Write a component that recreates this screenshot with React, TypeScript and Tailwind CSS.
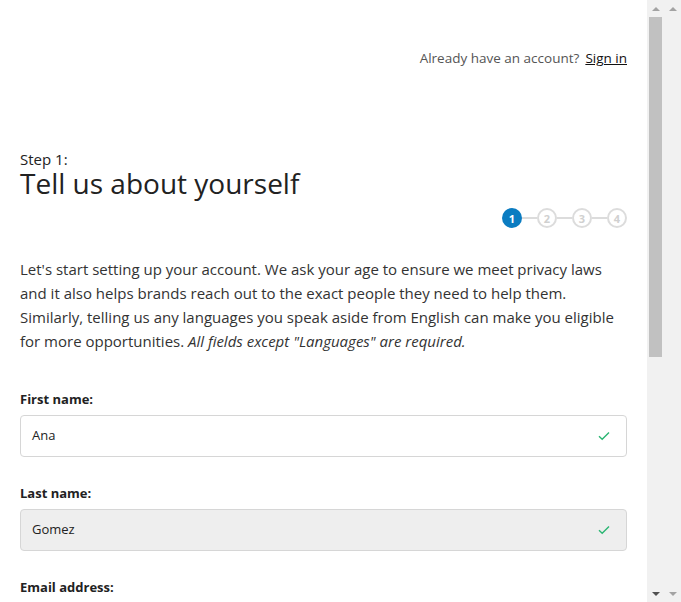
import React from 'react';

const font = "font-['Open_Sans','Liberation_Sans',sans-serif]";

const CheckIcon = () => (
  <svg width="12" height="10" viewBox="0 0 12 10" fill="none" className="shrink-0">
    <path d="M1 5.2 L4.2 8.3 L11 1.5" stroke="#2bb673" strokeWidth="1.4" />
  </svg>
);

interface FieldProps {
  label: string;
  value?: string;
  filled?: boolean;
  valid?: boolean;
}

const Field: React.FC<FieldProps> = ({ label, value = '', filled, valid }) => (
  <div className="flex flex-col gap-[6px] pb-[26px]">
    <label className="text-[13px] leading-5 font-bold text-[#222]">{label}</label>
    <div
      className={`flex h-[42px] items-center justify-between rounded-[4px] border border-[#d6d6d6] pr-[16px] pl-[11px] ${
        filled ? 'bg-[#eeeeee]' : 'bg-white'
      }`}
    >
      <span className="text-[13px] text-[#222]">{value}</span>
      {valid && <CheckIcon />}
    </div>
  </div>
);

const Stepper = () => (
  <div className="flex items-center justify-end">
    {[1, 2, 3, 4].map((n, i) => (
      <React.Fragment key={n}>
        {i > 0 && <div className="h-[2px] w-[15px] bg-[#dcdcdc]" />}
        <div
          className={`flex h-[20px] w-[20px] items-center justify-center rounded-full text-[11px] leading-none font-bold ${
            n === 1
              ? 'bg-[#0b7cc1] text-white'
              : 'border-2 border-[#dcdcdc] bg-white text-[#d0d0d0]'
          }`}
        >
          {n}
        </div>
      </React.Fragment>
    ))}
  </div>
);

// stand-in for the browser scrollbars shown in the screenshot
const ScrollTrack = ({ thumb, upDark, downDark }: { thumb?: boolean; upDark?: boolean; downDark?: boolean }) => (
  <div className="flex w-[17px] shrink-0 flex-col bg-[#f1f1f1]">
    <div className="flex h-[17px] items-center justify-center">
      <div
        className={`h-0 w-0 border-x-[4px] border-b-[4px] border-x-transparent ${
          upDark ? 'border-b-[#505050]' : 'border-b-[#a3a3a3]'
        }`}
      />
    </div>
    <div className="flex-1 px-[2px]">{thumb && <div className="h-[340px] w-full bg-[#c1c1c1]" />}</div>
    <div className="flex h-[17px] items-center justify-center">
      <div
        className={`h-0 w-0 border-x-[4px] border-t-[4px] border-x-transparent ${
          downDark ? 'border-t-[#505050]' : 'border-t-[#a3a3a3]'
        }`}
      />
    </div>
  </div>
);

export default function App() {
  return (
    <div className={`flex h-screen overflow-hidden bg-white ${font}`}>
      <div className="w-[647px] shrink-0 overflow-hidden">
        <div className="px-[20px] pb-[40px]">
          <div className="flex items-center justify-end pt-[48px] text-[13.5px] leading-5 text-[#555]">
            <span>Already have an account?</span>
            <a className="ml-[6px] text-[#111] underline" href="#">
              Sign in
            </a>
          </div>

          <div className="mt-[82px] text-[#222]">
            <div className="text-[15px] leading-[18px]">Step 1:</div>
            <h1 className="text-[28px] leading-[30px]">Tell us about yourself</h1>
          </div>

          <div className="mt-[10px]">
            <Stepper />
          </div>

          <p className="mt-[29px] text-[15px] leading-[24px] text-[#333]">
            Let's start setting up your account. We ask your age to ensure we meet privacy laws
            and it also helps brands reach out to the exact people they need to help them.
            Similarly, telling us any languages you speak aside from English can make you eligible
            for more opportunities. <em>All fields except "Languages" are required.</em>
          </p>

          <div className="mt-[36px]">
            <Field label="First name:" value="Ana" valid />
            <Field label="Last name:" value="Gomez" filled valid />
            <Field label="Email address:" />
            <Field label="Date of birth:" />
            <Field label="Languages:" />
          </div>
        </div>
      </div>
      <ScrollTrack thumb downDark />
      <ScrollTrack />
    </div>
  );
}
